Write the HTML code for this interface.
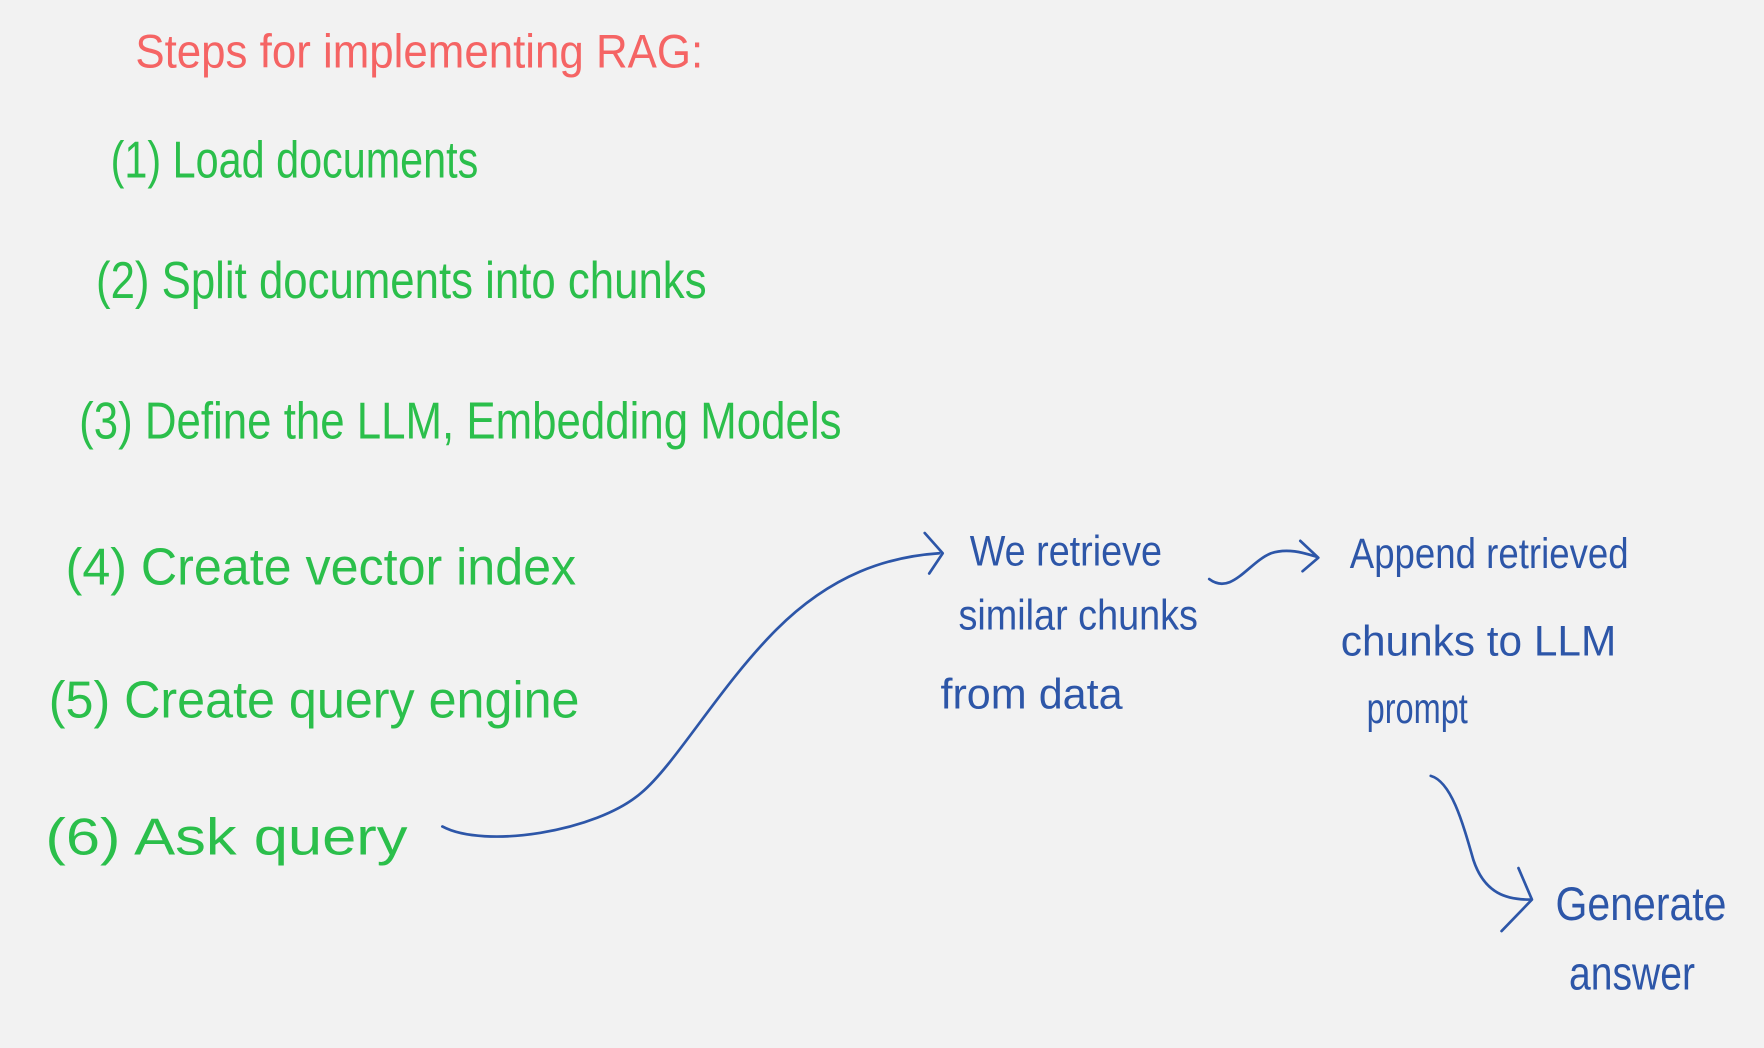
<!DOCTYPE html>
<html><head><meta charset="utf-8"><style>
html,body{margin:0;padding:0;background:#f2f2f2;}
svg{display:block;}
text{font-family:"Liberation Sans",sans-serif;font-weight:normal;}
.r{fill:#f56464;}
.g{fill:#2bbf4b;}
.b{fill:#2d56a8;}
</style></head><body>
<svg width="1764" height="1048" viewBox="0 0 1568 932" xmlns="http://www.w3.org/2000/svg">
<rect width="1568" height="932" fill="#f2f2f2"/>
<text class="r" x="120" y="60" font-size="42" textLength="505" lengthAdjust="spacingAndGlyphs">Steps for implementing RAG:</text>
<text class="g" x="98" y="158" font-size="46" textLength="327" lengthAdjust="spacingAndGlyphs">(1) Load documents</text>
<text class="g" x="85" y="265" font-size="46" textLength="543" lengthAdjust="spacingAndGlyphs">(2) Split documents into chunks</text>
<text class="g" x="70" y="390" font-size="46" textLength="678" lengthAdjust="spacingAndGlyphs">(3) Define the LLM, Embedding Models</text>
<text class="g" x="58" y="520" font-size="46" textLength="454" lengthAdjust="spacingAndGlyphs">(4) Create vector index</text>
<text class="g" x="43" y="638" font-size="46" textLength="472" lengthAdjust="spacingAndGlyphs">(5) Create query engine</text>
<text class="g" x="40" y="760" font-size="46" textLength="322" lengthAdjust="spacingAndGlyphs">(6)  Ask query</text>

<text class="b" x="862" y="503" font-size="38" textLength="171" lengthAdjust="spacingAndGlyphs">We retrieve</text>
<text class="b" x="852" y="560" font-size="38" textLength="213" lengthAdjust="spacingAndGlyphs">similar chunks</text>
<text class="b" x="836" y="630" font-size="38" textLength="162" lengthAdjust="spacingAndGlyphs">from data</text>
<text class="b" x="1200" y="505" font-size="38" textLength="248" lengthAdjust="spacingAndGlyphs">Append retrieved</text>
<text class="b" x="1192" y="583" font-size="38" textLength="245" lengthAdjust="spacingAndGlyphs">chunks to LLM</text>
<text class="b" x="1215" y="643" font-size="38" textLength="90" lengthAdjust="spacingAndGlyphs">prompt</text>
<text class="b" x="1383" y="818" font-size="42" textLength="152" lengthAdjust="spacingAndGlyphs">Generate</text>
<text class="b" x="1395" y="880" font-size="42" textLength="112" lengthAdjust="spacingAndGlyphs">answer</text>

<g fill="none" stroke="#2d56a8" stroke-width="2.4" stroke-linecap="round" stroke-linejoin="round">
<path d="M393,735 C430,755 530,740 570,705 C600,680 640,610 690,560 C740,510 790,495 835,492"/>
<path d="M822,474 L838,492 L826,510"/>
<path d="M1075,515 C1095,530 1110,500 1130,492 C1145,487 1160,492 1170,495"/>
<path d="M1156,481 L1172,496 L1158,508"/>
<path d="M1272,690 C1290,695 1300,730 1310,765 C1320,795 1340,800 1360,800"/>
<path d="M1350,772 L1362,800 L1335,828"/>
</g>
</svg>
</body></html>
